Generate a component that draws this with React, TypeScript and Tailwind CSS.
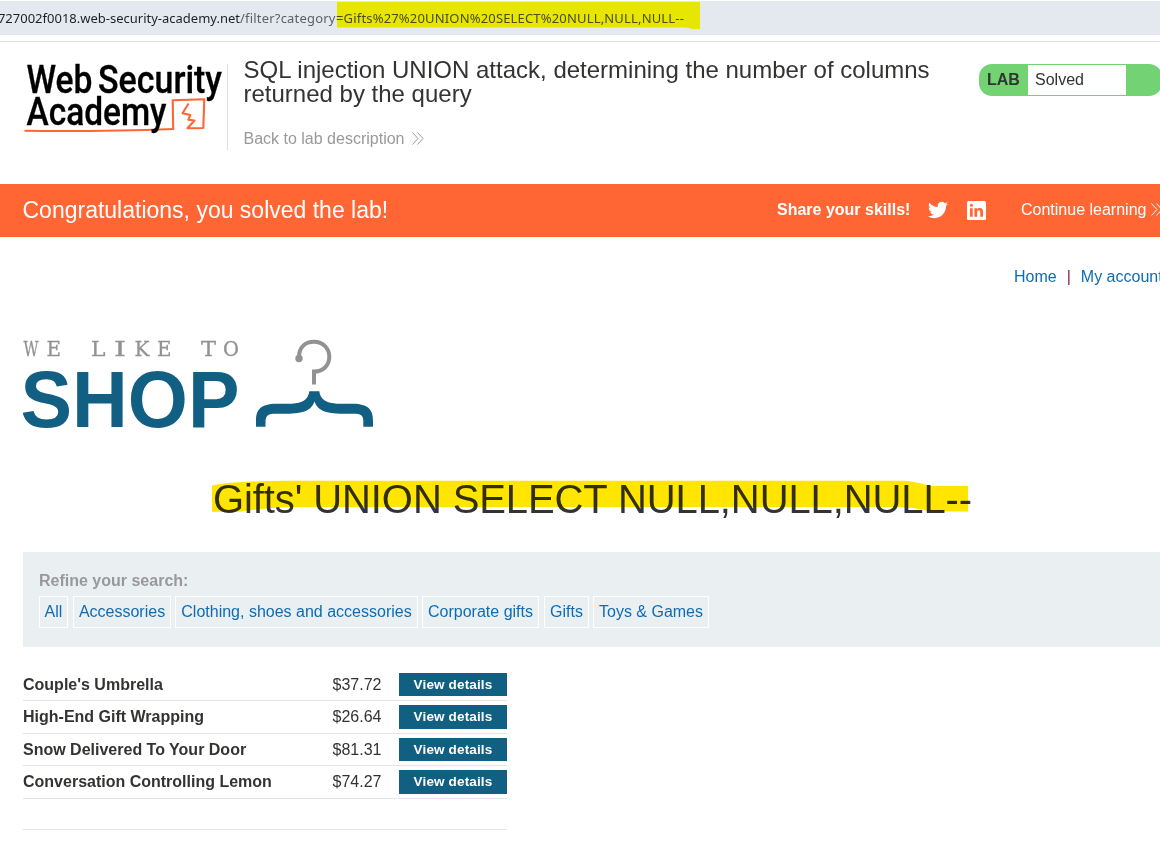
import React from "react";

const categories = [
  { name: "All", box: "w-[29px]" },
  { name: "Accessories", box: "ml-[5px] w-[98px]" },
  { name: "Clothing, shoes and accessories", box: "ml-1 w-[243px]" },
  { name: "Corporate gifts", box: "ml-1 w-[117px]" },
  { name: "Gifts", box: "ml-[5px] w-[45px]" },
  { name: "Toys & Games", box: "ml-1 w-[116px]" },
];

const products = [
  { name: "Couple's Umbrella", price: "$37.72", row: "h-8", button: "h-[23px]" },
  { name: "High-End Gift Wrapping", price: "$26.64", row: "h-[33px]", button: "h-6" },
  { name: "Snow Delivered To Your Door", price: "$81.31", row: "h-8", button: "h-[23px]" },
  { name: "Conversation Controlling Lemon", price: "$74.27", row: "h-[33px]", button: "h-6" },
];

function AddressBar() {
  return (
    <div className="mt-px flex h-[34px] items-start overflow-hidden bg-[#e4e9f0] font-['Noto_Sans','Open_Sans',sans-serif] text-[13px] leading-[34px] whitespace-nowrap">
      <div className="flex h-[34px] w-[240px] shrink-0 justify-end">
        <span className="text-[#1f2023]">727002f0018.web-security-academy.net</span>
      </div>
      <span className="w-[97px] shrink-0 tracking-[0.2px] text-[#5c6066]">/filter?category</span>
      <div className="relative h-[34px] w-[364px]">
        <svg className="absolute top-0 left-0" width="364" height="28" viewBox="0 0 364 28">
          <path d="M0 1 H363 V28 H356 Q352 26.500 348 26.500 H0 Z" fill="#e6e600" />
        </svg>
        <span className="relative -left-px tracking-[0.17px] text-[#4b4d10]">=Gifts%27%20UNION%20SELECT%20NULL,NULL,NULL--</span>
      </div>
    </div>
  );
}

function AcademyLogo() {
  return (
    <svg className="shrink-0" width="227" height="142" viewBox="0 42 227 142">
      <g fontFamily="Roboto, sans-serif" fontWeight="500" fontSize="38" fill="#000" stroke="#000" strokeWidth="0.300">
        <text x="26.500" y="93" textLength="66" lengthAdjust="spacingAndGlyphs">Web</text>
        <text x="98" y="93" textLength="124" lengthAdjust="spacingAndGlyphs">Security</text>
      </g>
      <g fill="none" stroke="#ff6633">
        <path d="M24.500 130.800 C70 131.500 120 131 173.500 129" strokeWidth="2" />
        <path d="M173.200 130 L172.700 100.200 L204.300 99.200 L203.300 128 L187.500 128.300 L194.500 120.500 L188.300 119.800 L190.300 115 L182.500 113.300 L188.600 103.500" strokeWidth="2.100" strokeLinejoin="round" />
      </g>
      <text x="26.500" y="124.800" textLength="140" lengthAdjust="spacingAndGlyphs" fontFamily="Roboto, sans-serif" fontWeight="500" fontSize="38" fill="#000" stroke="#000" strokeWidth="0.300">Academy</text>
    </svg>
  );
}

function DoubleChevron({ className }: { className: string }) {
  return (
    <svg className={className} width="12" height="13" viewBox="0 0 12 13" fill="none" stroke="currentColor" strokeWidth="1">
      <path d="M0.500 0.500 L6 6.500 L0.500 12.500 M5.500 0.500 L11 6.500 L5.500 12.500" />
    </svg>
  );
}

function LabHeader() {
  return (
    <header className="flex h-[142px] items-start">
      <AcademyLogo />
      <div className="mt-[22px] h-[86px] w-px shrink-0 bg-[#e0e0e0]" />
      <div className="ml-[15.5px] w-[735.5px] shrink-0 pt-4">
        <h1 className="text-[24px] leading-6 whitespace-nowrap text-[#333332]">
          SQL injection UNION attack, determining the number of columns
          <br />
          returned by the query
        </h1>
        <a className="mt-[23px] flex items-center text-[16px] leading-5 text-[#999999]">
          Back to lab description
          <DoubleChevron className="-mt-0.5 ml-2" />
        </a>
      </div>
      <div className="mt-[22px] flex h-8 w-[183px] shrink-0 overflow-hidden rounded-[13px] bg-[#73d373] text-[16px] leading-[30px]">
        <span className="w-[49px] pt-px pl-2 font-bold text-[#333332]">LAB</span>
        <span className="my-px w-[98px] bg-white pl-[7px] text-[#333332]">Solved</span>
      </div>
    </header>
  );
}

function SolvedBanner() {
  return (
    <section className="flex h-[53px] items-center bg-[#ff6633] whitespace-nowrap text-white">
      <p className="w-[777px] shrink-0 pl-[22.5px] text-[23px]">Congratulations, you solved the lab!</p>
      <p className="w-[151px] shrink-0 pb-0.5 text-[16px] font-bold">Share your skills!</p>
      <svg className="mb-0.5 shrink-0" width="20" height="20" viewBox="0 0 24 24" fill="currentColor">
        <path d="M23.953 4.570a10 10 0 01-2.825.775 4.958 4.958 0 002.163-2.723c-.951.555-2.005.959-3.127 1.184a4.920 4.920 0 00-8.384 4.482C7.690 8.095 4.067 6.130 1.640 3.162a4.822 4.822 0 00-.666 2.475c0 1.710.870 3.213 2.188 4.096a4.904 4.904 0 01-2.228-.616v.060a4.923 4.923 0 003.946 4.827 4.996 4.996 0 01-2.212.085 4.936 4.936 0 004.604 3.417 9.867 9.867 0 01-6.102 2.105c-.390 0-.779-.023-1.170-.067a13.995 13.995 0 007.557 2.209c9.053 0 13.998-7.496 13.998-13.985 0-.210 0-.420-.015-.630A9.935 9.935 0 0024 4.590z" />
      </svg>
      <svg className="ml-[19px] shrink-0" width="19" height="19" viewBox="0 0 19 19">
        <rect width="19" height="19" rx="1.500" fill="#fff" />
        <g fill="#ff6633">
          <circle cx="4.400" cy="4.300" r="1.500" />
          <path d="M3 7.200h2.700v8.500H3z M7.400 7.200H10v1.200c.6-.9 1.500-1.400 2.700-1.400 2.400 0 3.300 1.500 3.300 3.900v4.800h-2.700v-4.400c0-1.300-.3-2.100-1.500-2.100s-1.700.8-1.700 2.100v4.400H7.400z" />
        </g>
      </svg>
      <a className="ml-[35px] flex shrink-0 items-center pb-0.5 text-[16px]">
        Continue learning
        <DoubleChevron className="ml-[5px] shrink-0" />
      </a>
    </section>
  );
}

function ShopLogo() {
  return (
    <svg className="mt-9 block" width="390" height="120" viewBox="0 325 390 120">
      <g fontFamily="DejaVu Serif, serif" fontSize="21.300" fill="#929292" stroke="#929292" strokeWidth="0.300">
        <text y="356">
          <tspan x="23.500" textLength="15" lengthAdjust="spacingAndGlyphs">W</tspan>
          <tspan x="46.500" textLength="14.500" lengthAdjust="spacingAndGlyphs">E</tspan>
        </text>
        <text y="356">
          <tspan x="91" textLength="14.500" lengthAdjust="spacingAndGlyphs">L</tspan>
          <tspan x="114" textLength="12" lengthAdjust="spacingAndGlyphs">I</tspan>
          <tspan x="134.500" textLength="15" lengthAdjust="spacingAndGlyphs">K</tspan>
          <tspan x="157" textLength="14.500" lengthAdjust="spacingAndGlyphs">E</tspan>
        </text>
        <text y="356">
          <tspan x="201" textLength="15" lengthAdjust="spacingAndGlyphs">T</tspan>
          <tspan x="223" textLength="16" lengthAdjust="spacingAndGlyphs">O</tspan>
        </text>
      </g>
      <text x="20.500" y="426.700" textLength="219" lengthAdjust="spacingAndGlyphs" fontFamily="Liberation Sans, sans-serif" fontWeight="700" fontSize="80.500" fill="#125f84">SHOP</text>
      <g fill="none" stroke="#929292" strokeWidth="4">
        <path d="M299 357 C299 347 305.500 341.800 314 341.800 C323 341.800 329.300 348.500 329.300 356.800 C329.300 365.500 323 371.600 314 371.600 V384.500" />
      </g>
      <circle cx="299" cy="358.500" r="3.700" fill="#929292" />
      <path d="M309.300 391.300 H319.300 C320 399.500 327 403.300 337 403.700 H353 C368 404 373 409 373 421 V426.700 H363.300 V421 C363.300 415.500 361 413.800 353 413.800 C329 414.300 318.500 412.500 314.500 401.500 C310.500 412.500 300 414.300 276 413.800 C268 413.800 266 415.500 265.500 421 V426.700 H256 V421 C256 409 261 404 276 403.700 H292 C302 403.300 308.600 399.500 309.300 391.300 Z" fill="#125f84" />
    </svg>
  );
}

export default function App() {
  return (
    <div className="h-[844px] w-[1160px] overflow-hidden bg-white font-['Liberation_Sans',Arial,sans-serif] text-[#333332]">
      <AddressBar />
      <div className="mt-[6px] h-px bg-[#dddddd]" />
      <LabHeader />
      <SolvedBanner />
      <nav className="mt-7 flex h-6 items-center pl-[1014px] text-[16px] whitespace-nowrap text-[#0d6cb5]">
        <a>Home</a>
        <span className="mx-[10px] text-[#8c1d4f]">|</span>
        <a>My account</a>
      </nav>
      <ShopLogo />
      <div className="relative mt-[28px] h-[79px]">
        <svg className="absolute top-[6px] left-0" width="980" height="40" viewBox="0 479 980 40">
          <path d="M212 485.500 Q235 481 285 480.800 H902 Q917 481.500 930 486 H968 V511.500 H930 Q917 507.500 900 507 H290 Q262 508 240 511.700 H212 Z" fill="#ffe500" />
        </svg>
        <h2 className="relative pl-[213px] text-[40px] leading-[52px] tracking-[-0.1px] whitespace-nowrap text-[#333332] mix-blend-multiply">Gifts' UNION SELECT NULL,NULL,NULL--</h2>
      </div>
      <section className="ml-[23px] h-[95px] bg-[#eaeff2] pt-[19px] pl-4 text-[16px] whitespace-nowrap">
        <p className="h-[25px] leading-5 font-bold text-[#999999]">Refine your search:</p>
        <div className="flex h-8">
          {categories.map((c) => (
            <a key={c.name} className={`${c.box} flex shrink-0 justify-center border border-white leading-[29px] text-[#0d6cb5]`}>
              {c.name}
            </a>
          ))}
        </div>
      </section>
      <section className="mt-[22px] ml-[23px] w-[484px] text-[16px] whitespace-nowrap">
        {products.map((p) => (
          <div key={p.name} className={`${p.row} flex items-start border-b border-[#e4e4e4] pt-1 leading-[23px]`}>
            <span className="w-[309.5px] font-bold">{p.name}</span>
            <span className="w-[66.5px]">{p.price}</span>
            <a className={`${p.button} w-[108px] bg-[#125f84] text-center text-[13.500px] leading-[23px] font-bold tracking-[0.15px] text-white`}>View details</a>
          </div>
        ))}
        <div className="h-[31px] border-b border-[#e4e4e4]" />
      </section>
    </div>
  );
}
